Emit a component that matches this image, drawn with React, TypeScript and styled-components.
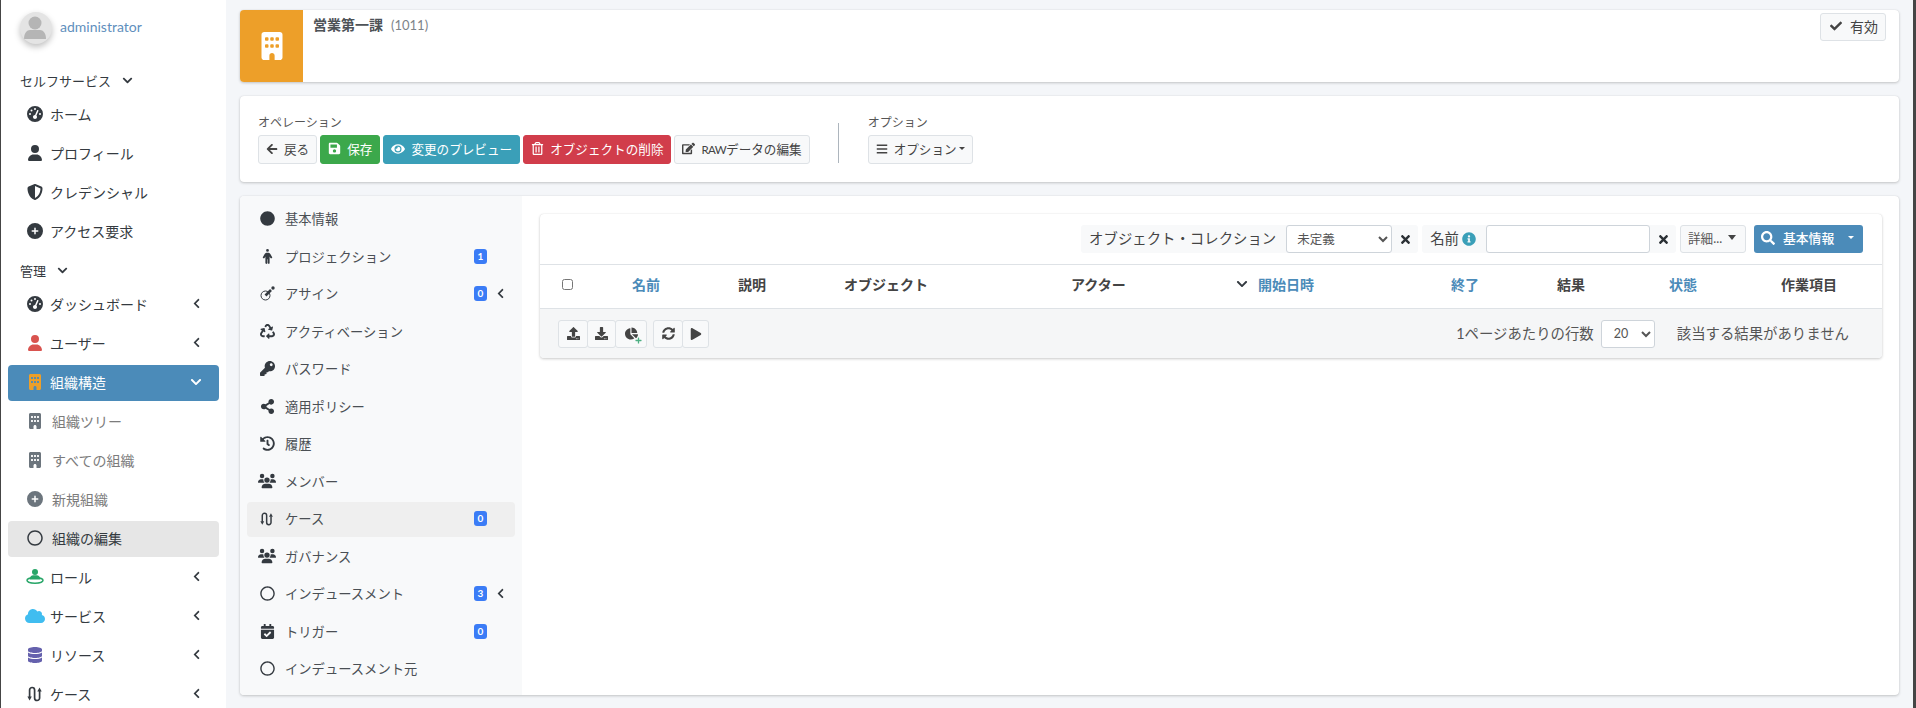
import styled, { createGlobalStyle } from 'styled-components';
import type { ReactNode } from 'react';
import {
  FaRegCircle,
  FaCircle,
  FaCloud,
  FaDatabase,
  FaChevronDown,
  FaChevronLeft,
  FaRecycle,
  FaKey,
  FaShareAlt,
  FaHistory,
  FaCalendarCheck,
  FaArrowLeft,
  FaSave,
  FaEye,
  FaRegTrashAlt,
  FaEdit,
  FaBars,
  FaCheck,
  FaInfoCircle,
  FaSearch,
  FaTimes,
  FaUpload,
  FaDownload,
  FaChartPie,
  FaPlus,
  FaSyncAlt,
  FaPlay,
} from 'react-icons/fa';
import {
  FaBuilding,
  FaGaugeHigh,
  FaUser,
  FaShieldHalved,
  FaCirclePlus,
  FaPerson,
  FaUsers,
} from 'react-icons/fa6';

const GlobalStyle = createGlobalStyle`
  html, body {
    margin: 0;
    padding: 0;
    height: 100%;
    overflow: hidden;
  }
  body {
    font-family: Lato, "Noto Sans CJK JP", sans-serif;
    color: #343a40;
    background: #f4f6f9;
  }
  * { box-sizing: border-box; }
  svg { flex: none; }
`;

const Page = styled.div`
  display: flex;
  height: 708px;
  overflow: hidden;
  border-left: 1px solid #454545;
  border-right: 3px solid #454545;
  background: #f4f6f9;
`;

/* ---------- sidebar ---------- */

const Sidebar = styled.aside`
  width: 225px;
  flex: none;
  background: #fff;
  padding: 12px 7px 0;
`;

const UserPanel = styled.div`
  display: flex;
  align-items: center;
  gap: 8px;
  padding-left: 12px;
  height: 32px;
  margin-bottom: 24px;
  color: #5f8fbd;
  font-size: 14px;
`;

const UserName = styled.span`
  margin-bottom: 3px;
`;

const Avatar = styled.div`
  width: 32px;
  height: 32px;
  border-radius: 50%;
  background: #e4e4e4;
  box-shadow: 0 3px 6px rgba(0, 0, 0, 0.25);
  overflow: hidden;
`;

const SectionHead = styled.div<{ $mb: number }>`
  display: flex;
  align-items: center;
  gap: 11px;
  height: 24px;
  margin-bottom: ${(p) => p.$mb}px;
  padding-left: 12px;
  font-size: 13px;
  color: #343a40;
`;

const NavRow = styled.div<{ $active?: boolean; $current?: boolean; $sub?: boolean }>`
  display: flex;
  align-items: center;
  height: 36px;
  margin-bottom: 3px;
  padding: 0 17px 3px 19px;
  border-radius: 4px;
  font-size: 14px;
  background: ${(p) => (p.$active ? '#4b8bb9' : p.$current ? '#e6e6e6' : 'transparent')};
  color: ${(p) => (p.$active ? '#fff' : p.$sub && !p.$current ? '#7c7c7c' : '#343a40')};
`;

const NavIcon = styled.span<{ $color?: string; $sub?: boolean }>`
  width: 16px;
  margin-right: ${(p) => (p.$sub ? '9px' : '7px')};
  display: flex;
  justify-content: center;
  flex: none;
  font-size: 16px;
  color: ${(p) => p.$color || 'inherit'};
`;

const NavLabel = styled.span`
  flex: 1;
  white-space: nowrap;
`;

const SidebarGap = styled.div`
  height: 5px;
`;

/* ---------- main ---------- */

const Main = styled.main`
  flex: 1;
  min-width: 0;
  padding: 10px 14px 0 14px;
  display: flex;
  flex-direction: column;
  gap: 14px;
`;

const Card = styled.section`
  background: #fff;
  border-radius: 4px;
  box-shadow: 0 0 1px rgba(0, 0, 0, 0.125), 0 1px 3px rgba(0, 0, 0, 0.2);
`;

const HeaderCard = styled(Card)`
  display: flex;
  height: 72px;
`;

const OrgIcon = styled.div`
  width: 63px;
  flex: none;
  display: flex;
  align-items: center;
  justify-content: center;
  background: #ed9f29;
  border-radius: 4px 0 0 4px;
  color: #fff;
  font-size: 28px;
`;

const OrgTitle = styled.div`
  flex: 1;
  padding: 5px 10px;
  display: flex;
  align-items: baseline;
  gap: 8px;
  line-height: 20px;
`;

const OrgName = styled.strong`
  font-size: 14px;
  color: #4d5257;
`;

const OrgCode = styled.span`
  font-size: 13px;
  color: #7d8389;
`;

const StatusBox = styled.div`
  align-self: flex-start;
  display: flex;
  align-items: center;
  gap: 8px;
  height: 28px;
  margin: 3px 13px 0 0;
  padding: 0 7px 3px 9px;
  border: 1px solid #dee2e6;
  border-radius: 3px;
  background: #f8f9fa;
  font-size: 14px;
  color: #444;
`;

const ActionCard = styled(Card)`
  display: flex;
  height: 86px;
  padding: 19px 18px 0;
`;

const ActionGroup = styled.div`
  display: flex;
  flex-direction: column;
`;

const ActionLabel = styled.div`
  font-size: 12px;
  line-height: 16px;
  height: 20px;
  color: #555;
`;

const ButtonRow = styled.div`
  display: flex;
  gap: 3px;
`;

const Divider = styled.div`
  width: 1px;
  height: 40px;
  margin: 8px 29px 0 28px;
  background: #adb5bd;
`;

const tones: Record<string, { bg: string; border: string; color: string }> = {
  light: { bg: '#f8f9fa', border: '#dee2e6', color: '#444' },
  green: { bg: '#3ca84b', border: '#3ca84b', color: '#fff' },
  teal: { bg: '#3a9fb8', border: '#3a9fb8', color: '#fff' },
  red: { bg: '#d13d4b', border: '#d13d4b', color: '#fff' },
  blue: { bg: '#4b8bb9', border: '#4b8bb9', color: '#fff' },
};

const ActionButton = styled.button<{ $tone?: string }>`
  display: inline-flex;
  align-items: center;
  gap: 6px;
  height: 29px;
  padding: 0 7px 2px;
  border-radius: 3px;
  font: inherit;
  font-size: 12.6px;
  white-space: nowrap;
  background: ${(p) => tones[p.$tone || 'light'].bg};
  border: 1px solid ${(p) => tones[p.$tone || 'light'].border};
  color: ${(p) => tones[p.$tone || 'light'].color};
`;

const RawWord = styled.span`
  font-size: 11.5px;
  letter-spacing: -0.6px;
`;

const Caret = styled.span`
  width: 0;
  height: 0;
  margin-left: -4px;
  border-left: 3px solid transparent;
  border-right: 3px solid transparent;
  border-top: 3px solid currentColor;
`;

const ContentCard = styled(Card)`
  display: flex;
  height: 499px;
`;

const DetailNav = styled.nav`
  width: 282px;
  flex: none;
  background: #f8f9fa;
  padding: 6px 7px 0;
  border-radius: 4px 0 0 4px;
`;

const DetailRow = styled.div<{ $current?: boolean }>`
  display: flex;
  align-items: center;
  height: 35px;
  margin-bottom: 2.5px;
  padding: 0 9px 2px 11px;
  border-radius: 4px;
  font-size: 13.3px;
  color: #4a4f54;
  background: ${(p) => (p.$current ? '#efefef' : 'transparent')};
`;

const DetailIcon = styled.span`
  width: 18px;
  margin-right: 9px;
  flex: none;
  display: flex;
  justify-content: center;
  font-size: 15px;
  color: #343a40;
`;

const DetailLabel = styled.span`
  flex: 1;
  white-space: nowrap;
`;

const Badge = styled.span`
  width: 13px;
  height: 15px;
  border-radius: 3px;
  background: #3b7cf6;
  color: #fff;
  font-size: 10px;
  font-weight: 700;
  line-height: 15px;
  text-align: center;
`;

const RowCaret = styled.span`
  width: 19px;
  display: flex;
  justify-content: flex-end;
  font-size: 11px;
  color: #343a40;
`;

const Content = styled.div`
  flex: 1;
  min-width: 0;
  padding: 18px 17px 0 18px;
`;

const TableBox = styled.div`
  border-radius: 4px;
  box-shadow: 0 0 1px rgba(0, 0, 0, 0.125), 0 1px 3px rgba(0, 0, 0, 0.2);
  background: #fff;
`;

const FilterBar = styled.div`
  display: flex;
  justify-content: flex-end;
  align-items: center;
  gap: 4px;
  height: 51px;
  padding: 0 19px 0 0;
  border-bottom: 1px solid #dee2e6;
`;

const FilterGroup = styled.div`
  display: flex;
  align-items: center;
  height: 28px;
  padding-left: 8px;
  border-radius: 3px;
  background: #f8f9fa;
  font-size: 14.4px;
  color: #444;
  white-space: nowrap;
`;

const FilterName = styled.span<{ $mr?: number }>`
  margin: 0 ${(p) => p.$mr || 0}px 3px 0;
`;

const FilterSelect = styled.select`
  width: 106px;
  height: 28px;
  margin-left: 10px;
  padding: 0 6px;
  border: 1px solid #ced4da;
  border-radius: 3px;
  background: #fff;
  color: #555;
  font: inherit;
  font-size: 12.5px;
`;

const FilterInput = styled.input`
  width: 164px;
  height: 28px;
  margin-left: 10px;
  border: 1px solid #ced4da;
  border-radius: 3px;
  background: #fff;
`;

const Clear = styled.span`
  width: 26px;
  display: flex;
  justify-content: center;
  font-size: 13px;
  color: #2b3035;
`;

const DetailsButton = styled.button`
  display: inline-flex;
  align-items: center;
  gap: 6px;
  width: 66px;
  height: 28px;
  padding: 0 7px 3px;
  border: 1px solid #dee2e6;
  border-radius: 3px;
  background: #f8f9fa;
  font: inherit;
  font-size: 12.6px;
  color: #555;
  white-space: nowrap;
`;

const BigCaret = styled.span`
  width: 0;
  height: 0;
  border-left: 4px solid transparent;
  border-right: 4px solid transparent;
  border-top: 5px solid #444;
`;

const SearchButton = styled.button`
  display: inline-flex;
  align-items: center;
  width: 109px;
  height: 28px;
  margin-left: 4px;
  padding: 0 7px 3px;
  gap: 8px;
  border: 0;
  border-radius: 3px;
  background: #4b8bb9;
  color: #fff;
  font: inherit;
  font-size: 12.8px;
  font-weight: 500;
  white-space: nowrap;
`;

const SearchCaret = styled.span`
  width: 0;
  height: 0;
  margin-left: 6px;
  border-left: 3px solid transparent;
  border-right: 3px solid transparent;
  border-top: 3px solid #fff;
`;

const HeadRow = styled.div`
  display: grid;
  grid-template-columns: 71px 106px 106px 227px 165px 215px 106px 112px 112px 1fr;
  align-items: center;
  height: 44px;
  padding: 0 0 5px 21px;
  border-bottom: 1px solid #dee2e6;
  font-size: 14px;
  font-weight: 700;
  color: #444;
`;

const HeadCell = styled.span<{ $link?: boolean }>`
  display: flex;
  align-items: center;
  gap: 10px;
  white-space: nowrap;
  color: ${(p) => (p.$link ? '#4b8bb9' : '#444')};
`;

const CheckBox = styled.input`
  width: 11px;
  height: 11px;
  margin: 0 0 0 1px;
`;

const FootRow = styled.div`
  display: flex;
  align-items: center;
  height: 49px;
  padding: 0 33px 0 18px;
  background: #f5f6f7;
  border-radius: 0 0 4px 4px;
  font-size: 14.4px;
  color: #555;
  white-space: nowrap;
`;

const FootText = styled.span`
  padding-bottom: 2px;
`;

const IconGroup = styled.div`
  display: flex;
  margin-right: 7px;
`;

const IconButton = styled.button<{ $w: number }>`
  position: relative;
  width: ${(p) => p.$w}px;
  height: 28px;
  padding: 0;
  margin-right: -1px;
  display: flex;
  align-items: center;
  justify-content: center;
  border: 1px solid #dee2e6;
  border-radius: 3px;
  background: #f8f9fa;
  font-size: 13px;
  color: #444;
`;

const PlusMark = styled.span`
  position: absolute;
  right: 4px;
  bottom: 3px;
  display: flex;
  font-size: 7px;
  color: #4caf82;
`;

const Spacer = styled.div`
  flex: 1;
`;

const PageSize = styled.select`
  width: 54px;
  height: 28px;
  margin: 0 22px 0 7px;
  padding: 0 6px 0 8px;
  border: 1px solid #ced4da;
  border-radius: 3px;
  background: #fff;
  color: #555;
  font: inherit;
  font-size: 12.5px;
`;

/* ---------- drawn icons ---------- */

function PersonAvatar() {
  return (
    <svg width="32" height="32" viewBox="0 0 32 32">
      <circle cx="15" cy="11" r="6.5" fill="#b5b5b5" />
      <path d="M4 27c0-6 3-9 6-9h10c3 0 6 3 6 9z" fill="#b5b5b5" />
    </svg>
  );
}

function CaseIcon({ size = 16 }: { size?: number }) {
  return (
    <svg width={size} height={size} viewBox="0 0 16 16" fill="none" stroke="currentColor" strokeWidth="1.7">
      <path d="M2.6 11V4a2.5 2.5 0 0 1 5 0v8a2.5 2.5 0 0 0 5 0V5" />
      <path d="M0.4 10.5h4.4L2.6 14.6z" fill="currentColor" stroke="none" />
      <path d="M10.3 5.5h4.4L12.5 1.4z" fill="currentColor" stroke="none" />
    </svg>
  );
}

function AssignIcon() {
  return (
    <svg width="15" height="15" viewBox="0 0 15 15" fill="none" stroke="currentColor">
      <circle cx="5.5" cy="9.5" r="4.5" strokeWidth="1" />
      <path d="M5.5 9.5L11 4" strokeWidth="2.6" />
      <circle cx="13" cy="2" r="1.7" fill="currentColor" stroke="none" />
    </svg>
  );
}

function RoleIcon() {
  return (
    <svg width="18" height="15" viewBox="0 0 18 15" fill="currentColor">
      <circle cx="9" cy="3" r="3" />
      <path d="M3.6 10.6c0-3 2-4.4 3.6-4.4h3.6c1.6 0 3.6 1.4 3.6 4.4z" />
      <ellipse cx="9" cy="11.3" rx="8" ry="2.9" fill="none" stroke="currentColor" strokeWidth="1.5" />
    </svg>
  );
}

/* ---------- data ---------- */

type NavItem = {
  label: string;
  icon: ReactNode;
  color?: string;
  caret?: boolean;
  active?: boolean;
  current?: boolean;
  sub?: boolean;
};

const selfService: NavItem[] = [
  { label: 'ホーム', icon: <FaGaugeHigh /> },
  { label: 'プロフィール', icon: <FaUser /> },
  { label: 'クレデンシャル', icon: <FaShieldHalved /> },
  { label: 'アクセス要求', icon: <FaCirclePlus /> },
];

const admin: NavItem[] = [
  { label: 'ダッシュボード', icon: <FaGaugeHigh />, caret: true },
  { label: 'ユーザー', icon: <FaUser />, color: '#d9534f', caret: true },
  { label: '組織構造', icon: <FaBuilding />, color: '#ed9f29', active: true },
  { label: '組織ツリー', icon: <FaBuilding />, sub: true, color: '#6c757d' },
  { label: 'すべての組織', icon: <FaBuilding />, sub: true, color: '#6c757d' },
  { label: '新規組織', icon: <FaCirclePlus />, sub: true, color: '#6c757d' },
  { label: '組織の編集', icon: <FaRegCircle />, sub: true, current: true },
  { label: 'ロール', icon: <RoleIcon />, color: '#28a668', caret: true },
  { label: 'サービス', icon: <FaCloud size={20} />, color: '#40bdf0', caret: true },
  { label: 'リソース', icon: <FaDatabase />, color: '#6561ad', caret: true },
  { label: 'ケース', icon: <CaseIcon />, caret: true },
];

type DetailItem = {
  label: string;
  icon: ReactNode;
  badge?: string;
  caret?: boolean;
  current?: boolean;
};

const detailItems: DetailItem[] = [
  { label: '基本情報', icon: <FaCircle /> },
  { label: 'プロジェクション', icon: <FaPerson />, badge: '1' },
  { label: 'アサイン', icon: <AssignIcon />, badge: '0', caret: true },
  { label: 'アクティベーション', icon: <FaRecycle /> },
  { label: 'パスワード', icon: <FaKey /> },
  { label: '適用ポリシー', icon: <FaShareAlt /> },
  { label: '履歴', icon: <FaHistory /> },
  { label: 'メンバー', icon: <FaUsers size={18} /> },
  { label: 'ケース', icon: <CaseIcon size={14} />, badge: '0', current: true },
  { label: 'ガバナンス', icon: <FaUsers size={18} /> },
  { label: 'インデュースメント', icon: <FaRegCircle />, badge: '3', caret: true },
  { label: 'トリガー', icon: <FaCalendarCheck />, badge: '0' },
  { label: 'インデュースメント元', icon: <FaRegCircle /> },
];

function NavEntry({ item }: { item: NavItem }) {
  return (
    <NavRow $active={item.active} $current={item.current} $sub={item.sub}>
      <NavIcon $color={item.color} $sub={item.sub}>
        {item.icon}
      </NavIcon>
      <NavLabel>{item.label}</NavLabel>
      {item.caret && <FaChevronLeft size={11} />}
      {item.active && <FaChevronDown size={12} />}
    </NavRow>
  );
}

export default function App() {
  return (
    <>
      <GlobalStyle />
      <Page>
        <Sidebar>
          <UserPanel>
            <Avatar>
              <PersonAvatar />
            </Avatar>
            <UserName>administrator</UserName>
          </UserPanel>
          <SectionHead $mb={5.5}>
            セルフサービス <FaChevronDown size={11} />
          </SectionHead>
          {selfService.map((item) => (
            <NavEntry key={item.label} item={item} />
          ))}
          <SidebarGap />
          <SectionHead $mb={4.5}>
            管理 <FaChevronDown size={11} />
          </SectionHead>
          {admin.map((item) => (
            <NavEntry key={item.label} item={item} />
          ))}
        </Sidebar>

        <Main>
          <HeaderCard>
            <OrgIcon>
              <FaBuilding />
            </OrgIcon>
            <OrgTitle>
              <OrgName>営業第一課</OrgName>
              <OrgCode>(1011)</OrgCode>
            </OrgTitle>
            <StatusBox>
              <FaCheck size={12} />
              有効
            </StatusBox>
          </HeaderCard>

          <ActionCard>
            <ActionGroup>
              <ActionLabel>オペレーション</ActionLabel>
              <ButtonRow>
                <ActionButton>
                  <FaArrowLeft size={12} />
                  戻る
                </ActionButton>
                <ActionButton $tone="green">
                  <FaSave size={13} />
                  保存
                </ActionButton>
                <ActionButton $tone="teal">
                  <FaEye size={14} />
                  変更のプレビュー
                </ActionButton>
                <ActionButton $tone="red">
                  <FaRegTrashAlt size={13} />
                  オブジェクトの削除
                </ActionButton>
                <ActionButton>
                  <FaEdit size={13} />
                  <span>
                    <RawWord>RAW</RawWord>データの編集
                  </span>
                </ActionButton>
              </ButtonRow>
            </ActionGroup>
            <Divider />
            <ActionGroup>
              <ActionLabel>オプション</ActionLabel>
              <ActionButton>
                <FaBars size={12} />
                オプション
                <Caret />
              </ActionButton>
            </ActionGroup>
          </ActionCard>

          <ContentCard>
            <DetailNav>
              {detailItems.map((item) => (
                <DetailRow key={item.label} $current={item.current}>
                  <DetailIcon>{item.icon}</DetailIcon>
                  <DetailLabel>{item.label}</DetailLabel>
                  {item.badge && <Badge>{item.badge}</Badge>}
                  <RowCaret>{item.caret && <FaChevronLeft />}</RowCaret>
                </DetailRow>
              ))}
            </DetailNav>

            <Content>
              <TableBox>
                <FilterBar>
                  <FilterGroup>
                    <FilterName>オブジェクト・コレクション</FilterName>
                    <FilterSelect defaultValue="undef">
                      <option value="undef">未定義</option>
                    </FilterSelect>
                    <Clear>
                      <FaTimes />
                    </Clear>
                  </FilterGroup>
                  <FilterGroup>
                    <FilterName $mr={3}>名前</FilterName>
                    <FaInfoCircle size={14} color="#3a9fb8" />
                    <FilterInput />
                    <Clear>
                      <FaTimes />
                    </Clear>
                  </FilterGroup>
                  <DetailsButton>
                    詳細...
                    <BigCaret />
                  </DetailsButton>
                  <SearchButton>
                    <FaSearch size={14} />
                    基本情報
                    <SearchCaret />
                  </SearchButton>
                </FilterBar>

                <HeadRow>
                  <HeadCell>
                    <CheckBox type="checkbox" />
                  </HeadCell>
                  <HeadCell $link>名前</HeadCell>
                  <HeadCell>説明</HeadCell>
                  <HeadCell>オブジェクト</HeadCell>
                  <HeadCell>アクター</HeadCell>
                  <HeadCell $link>
                    <FaChevronDown size={12} color="#343a40" />
                    開始日時
                  </HeadCell>
                  <HeadCell $link>終了</HeadCell>
                  <HeadCell>結果</HeadCell>
                  <HeadCell $link>状態</HeadCell>
                  <HeadCell>作業項目</HeadCell>
                </HeadRow>

                <FootRow>
                  <IconGroup>
                    <IconButton $w={30}>
                      <FaUpload />
                    </IconButton>
                    <IconButton $w={29}>
                      <FaDownload />
                    </IconButton>
                    <IconButton $w={32}>
                      <FaChartPie />
                      <PlusMark>
                        <FaPlus />
                      </PlusMark>
                    </IconButton>
                  </IconGroup>
                  <IconGroup>
                    <IconButton $w={30}>
                      <FaSyncAlt size={13} />
                    </IconButton>
                    <IconButton $w={27}>
                      <FaPlay size={12} />
                    </IconButton>
                  </IconGroup>
                  <Spacer />
                  <FootText>1ページあたりの行数</FootText>
                  <PageSize defaultValue="20">
                    <option value="20">20</option>
                  </PageSize>
                  <FootText>該当する結果がありません</FootText>
                </FootRow>
              </TableBox>
            </Content>
          </ContentCard>
        </Main>
      </Page>
    </>
  );
}
